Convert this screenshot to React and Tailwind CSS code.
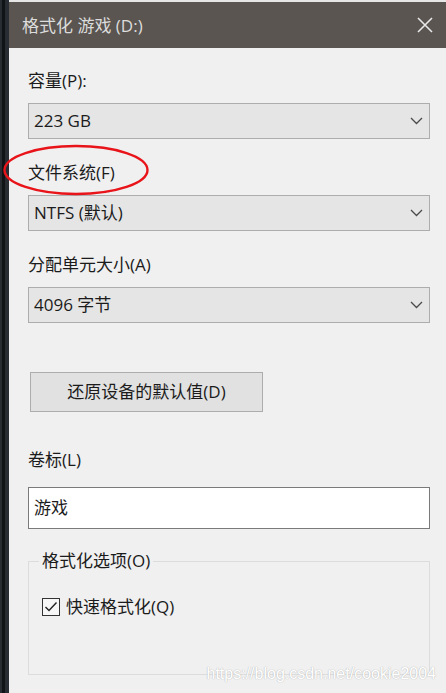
import React from 'react';

const font = { fontFamily: '"Open Sans", "Noto Sans CJK SC", sans-serif' };

function Chevron() {
  return (
    <svg width="13" height="8" viewBox="0 0 13 8" className="shrink-0">
      <polyline points="1,1 6.5,6.5 12,1" fill="none" stroke="#4a4a4a" strokeWidth="1.3" />
    </svg>
  );
}

function Select({ value }) {
  return (
    <div className="h-[36px] flex items-center justify-between border border-[#adadad] bg-[#e5e5e5] pl-[5px] pr-[6px]">
      <span>{value}</span>
      <Chevron />
    </div>
  );
}

export default function App() {
  return (
    <div className="relative w-[446px] h-[693px] flex bg-[#f0f0f0] overflow-hidden text-[17px] text-[#1b1b1b]" style={font}>
      <div className="w-[9px] shrink-0 bg-[#272d33] flex">
        <div className="w-[3px] ml-[2px] bg-[#111417]" />
      </div>

      <div className="flex-1 flex flex-col">
        <div className="h-[2px] bg-[#e6e6e6]" />
        <div className="h-[46px] bg-[#5a5550] flex items-center justify-between pl-[13px] pr-[13px] text-[#dcdcdc]">
          <span className="leading-none">格式化 游戏 (D:)</span>
          <svg width="16" height="16" viewBox="0 0 16 16">
            <path d="M1 1 L15 15 M15 1 L1 15" stroke="#e8e8e8" strokeWidth="1.6" />
          </svg>
        </div>

        <div className="flex flex-col pl-[19px] pr-[16px] pt-[22px] leading-[22px]">
          <div>容量(P):</div>
          <div className="mt-[11px]"><Select value="223 GB" /></div>

          <div className="mt-[23px]">文件系统(F)</div>
          <div className="mt-[11px]"><Select value="NTFS (默认)" /></div>

          <div className="mt-[23px]">分配单元大小(A)</div>
          <div className="mt-[11px]"><Select value="4096 字节" /></div>

          <button className="mt-[49px] ml-[2px] w-[233px] h-[40px] border border-[#adadad] bg-[#e1e1e1] flex items-center justify-center">
            还原设备的默认值(D)
          </button>

          <div className="mt-[37px]">卷标(L)</div>
          <div className="mt-[16px] h-[42px] border border-[#7a7a7a] bg-white flex items-center pl-[5px]">游戏</div>

          <fieldset className="mt-[21px] h-[125px] border border-[#dcdcdc]">
            <legend className="ml-[10px] px-[3px]">格式化选项(O)</legend>
            <div className="mt-[24px] ml-[13px] flex items-center gap-[6px]">
              <div className="w-[18px] h-[18px] border border-[#333] bg-[#f7f7f7] flex items-center justify-center">
                <svg width="14" height="12" viewBox="0 0 14 12">
                  <polyline points="1.5,6 5,9.5 12.5,1.5" fill="none" stroke="#222" strokeWidth="1.4" />
                </svg>
              </div>
              <span>快速格式化(Q)</span>
            </div>
          </fieldset>
        </div>
      </div>

      <svg className="absolute left-[2px] top-[144px]" width="148" height="54" viewBox="0 0 148 54">
        <ellipse cx="74" cy="26" rx="71.5" ry="24" fill="none" stroke="#e8141a" strokeWidth="2.4" />
      </svg>

      <div
        className="absolute right-[10px] bottom-[11px] text-[16px] text-white leading-none"
        style={{ fontFamily: '"Liberation Sans", sans-serif', textShadow: '0 0 1px #bdbdbd, 0 0 1px #bdbdbd' }}
      >
        https://blog.csdn.net/cookie2004
      </div>
    </div>
  );
}
